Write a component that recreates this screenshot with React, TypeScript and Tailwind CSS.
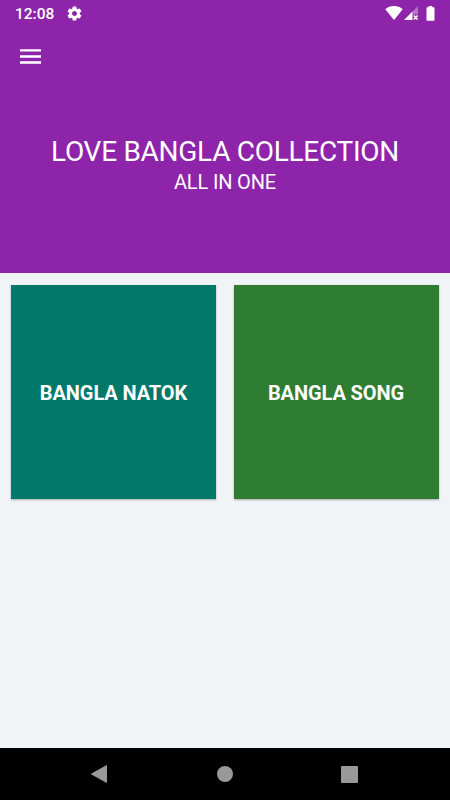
const categories = [
    { id: 1, title: "BANGLA NATOK", color: "bg-[#00796b]" },
    { id: 2, title: "BANGLA SONG", color: "bg-[#2e7d32]" },
];

function StatusBar() {
    return (
        <div className="flex h-[26px] items-center justify-between pl-[15px] pr-[15px] text-white">
            <div className="flex items-center gap-[11px]">
                <span className="w-[40px] whitespace-nowrap pt-[2px] text-[15.5px] leading-[26px] font-medium">12:08</span>
                <svg className="h-[17px] w-[17px]" viewBox="0 0 24 24" fill="currentColor">
                    <path d="M19.43 12.98c.04-.32.07-.64.07-.98s-.03-.66-.07-.98l2.11-1.65c.19-.15.24-.42.12-.64l-2-3.46c-.12-.22-.39-.3-.61-.22l-2.49 1c-.52-.4-1.08-.73-1.69-.98l-.38-2.65C14.46 2.18 14.25 2 14 2h-4c-.25 0-.46.18-.49.42l-.38 2.65c-.61.25-1.17.59-1.69.98l-2.49-1c-.23-.09-.49 0-.61.22l-2 3.46c-.13.22-.07.49.12.64l2.11 1.65c-.04.32-.07.65-.07.98s.03.66.07.98l-2.11 1.65c-.19.15-.24.42-.12.64l2 3.46c.12.22.39.3.61.22l2.49-1c.52.4 1.08.73 1.69.98l.38 2.65c.03.24.24.42.49.42h4c.25 0 .46-.18.49-.42l.38-2.65c.61-.25 1.17-.59 1.69-.98l2.49 1c.23.09.49 0 .61-.22l2-3.46c.12-.22.07-.49-.12-.64l-2.11-1.65zM12 15.5c-1.93 0-3.5-1.57-3.5-3.5s1.57-3.5 3.5-3.5 3.5 1.57 3.5 3.5-1.57 3.5-3.5 3.5z" />
                </svg>
            </div>
            <div className="flex items-center">
                {/* Wifi */}
                <svg className="h-[14px] w-[18px]" viewBox="0 0 18 14" fill="currentColor">
                    <path d="M9 14 0.3 3.2C2.7 1.2 5.7 0 9 0s6.3 1.2 8.7 3.2z" />
                </svg>
                {/* Señal móvil sin datos */}
                <svg className="ml-px h-[14px] w-[14px]" viewBox="0 0 14 14" fill="currentColor">
                    <path d="M14 0v8.5H8.5V5.5z" opacity=".35" />
                    <path d="M8.5 5.5V14H0z" />
                    <path d="m9.8 9.6 3.7 3.9m0-3.9-3.7 3.9" stroke="currentColor" strokeWidth="1.5" />
                </svg>
                {/* Batería */}
                <svg className="ml-[8px] h-[15px] w-[9px]" viewBox="0 0 9 15" fill="currentColor">
                    <path d="M2.7 0h3.6v1.2h1.5c.4 0 .7.3.7.7v12.2c0 .4-.3.7-.7.7H1.2c-.4 0-.7-.3-.7-.7V1.9c0-.4.3-.7.7-.7h1.5z" />
                </svg>
            </div>
        </div>
    );
}

export default function App() {
    return (
        <div className="flex h-screen w-full flex-col overflow-hidden bg-[#f0f4f7] font-[Roboto,sans-serif]">
            {/* Header */}
            <header className="flex h-[273px] flex-shrink-0 flex-col bg-[#8e24aa] text-white">
                <StatusBar />
                <button className="mt-[23px] ml-5 h-[15px] w-[21px]" aria-label="Menu">
                    <svg className="h-[15px] w-[21px]" viewBox="0 0 21 15" fill="currentColor">
                        <path d="M0 .2h21v2.4H0zM0 6.3h21v2.4H0zM0 12.3h21v2.4H0z" />
                    </svg>
                </button>
                <div className="mt-[71px] text-center">
                    <h1 className="text-[28px] leading-[33px] tracking-[-0.28px] whitespace-nowrap">LOVE BANGLA COLLECTION</h1>
                    <p className="mt-[2px] text-[20px] leading-[24px] tracking-[-0.15px]">ALL IN ONE</p>
                </div>
            </header>

            {/* Categorías */}
            <main className="grid flex-1 grid-cols-2 content-start gap-[17.5px] pt-[12px] pr-[11.5px] pl-[11px]">
                {categories.map(c => (
                    <button
                        key={c.id}
                        className={`flex h-[214px] items-center justify-center pt-[2px] text-[20px] font-bold tracking-[-0.1px] text-white shadow-[0_1px_2px_rgba(0,0,0,0.3)] ${c.color}`}
                    >
                        {c.title}
                    </button>
                ))}
            </main>

            {/* Barra de navegación */}
            <nav className="flex h-[52px] flex-shrink-0 items-center bg-black pl-[91px] text-[#999999]">
                <svg className="h-[18px] w-[16px]" viewBox="0 0 16 18" fill="currentColor">
                    <path d="M15.3 0.3c.4-.2.7 0 .7.4v16.6c0 .4-.3.6-.7.4L.4 9.4c-.4-.2-.4-.6 0-.8z" />
                </svg>
                <span className="ml-[110px] h-[16px] w-[16px] rounded-full bg-[#999999]" />
                <span className="ml-[108px] h-[17px] w-[17px] rounded-[1px] bg-[#999999]" />
            </nav>
        </div>
    );
}
